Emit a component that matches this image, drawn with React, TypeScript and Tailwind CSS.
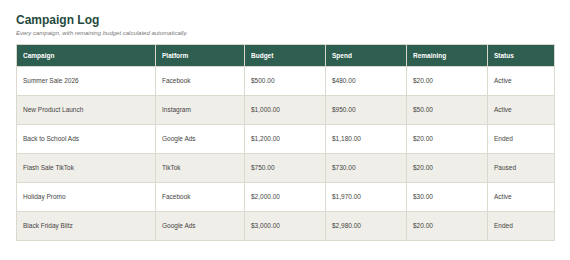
const rows = [
  ['Summer Sale 2026', 'Facebook', '$500.00', '$480.00', '$20.00', 'Active'],
  ['New Product Launch', 'Instagram', '$1,000.00', '$950.00', '$50.00', 'Active'],
  ['Back to School Ads', 'Google Ads', '$1,200.00', '$1,180.00', '$20.00', 'Ended'],
  ['Flash Sale TikTok', 'TikTok', '$750.00', '$730.00', '$20.00', 'Paused'],
  ['Holiday Promo', 'Facebook', '$2,000.00', '$1,970.00', '$30.00', 'Active'],
  ['Black Friday Blitz', 'Google Ads', '$3,000.00', '$2,980.00', '$20.00', 'Ended'],
]

const headers = ['Campaign', 'Platform', 'Budget', 'Spend', 'Remaining', 'Status']
const widths = ['w-[139px]', 'w-[89px]', 'w-[81px]', 'w-[81px]', 'w-[81px]', 'w-[67px]']

export default function App() {
  return (
    <div className="w-[570px] h-[260px] bg-white font-['Liberation_Sans',Arial,sans-serif] px-4 pt-[13px]">
      {/* Title */}
      <h1 className="text-[12px] leading-[15px] font-bold text-[#1f4a3d]">Campaign Log</h1>
      <p className="text-[6px] leading-[8px] italic text-[#777] mt-[1px]">
        Every campaign, with remaining budget calculated automatically.
      </p>

      <table className="mt-[7px] w-[538px] border-collapse table-fixed text-[6.5px]">
        <thead>
          <tr className="h-[22px] bg-[#2e5e4f]">
            {headers.map((h, i) => (
              <th
                key={h}
                className={`${widths[i]} border border-[#d9d6cc] px-[6px] text-left font-bold text-white`}
              >
                {h}
              </th>
            ))}
          </tr>
        </thead>
        <tbody>
          {rows.map((r, ri) => (
            <tr key={r[0]} className={`h-[29px] ${ri % 2 === 1 ? 'bg-[#f0eee8]' : 'bg-white'}`}>
              {r.map((c, ci) => (
                <td key={ci} className="border border-[#dcd9d0] px-[6px] text-[#444]">
                  {c}
                </td>
              ))}
            </tr>
          ))}
        </tbody>
      </table>
    </div>
  )
}
